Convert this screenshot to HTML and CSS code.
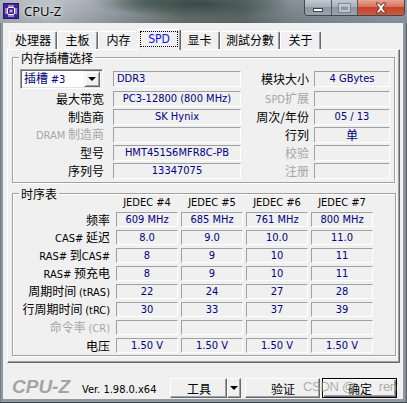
FILE: index.html
```html
<!DOCTYPE html>
<html>
<head>
<meta charset="utf-8">
<title>CPU-Z</title>
<link rel="stylesheet" href="styles.css">
</head>
<body>
<div class="window">
  <div class="titlebar">
    <div class="app-icon">
      <svg width="16" height="16" viewBox="0 0 16 16">
        <rect width="16" height="16" fill="#2a1466"/>
        <rect x="1" y="1" width="14" height="14" fill="#45259a"/>
        <g stroke="#e8e4ff" stroke-width="1">
          <line x1="6" y1="2" x2="6" y2="4"/><line x1="8" y1="2" x2="8" y2="4"/><line x1="10" y1="2" x2="10" y2="4"/>
          <line x1="6" y1="12" x2="6" y2="14"/><line x1="8" y1="12" x2="8" y2="14"/><line x1="10" y1="12" x2="10" y2="14"/>
          <line x1="2" y1="6" x2="4" y2="6"/><line x1="2" y1="8" x2="4" y2="8"/><line x1="2" y1="10" x2="4" y2="10"/>
          <line x1="12" y1="6" x2="14" y2="6"/><line x1="12" y1="8" x2="14" y2="8"/><line x1="12" y1="10" x2="14" y2="10"/>
        </g>
        <rect x="4.5" y="4.5" width="7" height="7" rx="1.5" fill="#3a1c88" stroke="#ffffff" stroke-width="1"/>
        <rect x="6.5" y="6.5" width="3" height="3" fill="#b9a8ff"/>
      </svg>
    </div>
    <div class="title">CPU-Z</div>
    <div class="wctrls">
      <div class="wbtn wmin"><span class="min-glyph"></span></div>
      <div class="wbtn wmax"><span class="max-glyph"></span></div>
      <div class="wbtn wclose">
        <svg width="14" height="12" viewBox="0 0 14 12">
          <path d="M2 1 L5 1 L7 3.6 L9 1 L12 1 L8.6 6 L12 11 L9 11 L7 8.4 L5 11 L2 11 L5.4 6 Z" fill="#ffffff" stroke="#5a2318" stroke-width="0.9" stroke-linejoin="round"/>
        </svg>
      </div>
    </div>
  </div>

  <div class="client">
    <div class="tabs">
      <div class="tab">处理器</div>
      <div class="tab">主板</div>
      <div class="tab">内存</div>
      <div class="tab active"><span class="focus">SPD</span></div>
      <div class="tab">显卡</div>
      <div class="tab">測試分數</div>
      <div class="tab">关于</div>
    </div>

    <div class="panel">
      <div class="group slot-group">
        <div class="legend">内存插槽选择</div>
        <div class="slot-grid">
          <div class="combo"><span class="combo-text">插槽 <span class="en">#3</span></span><span class="drop"><span class="tri"></span></span></div>
          <div class="field left">DDR3</div>
          <div class="lbl">模块大小</div>
          <div class="field">4 GBytes</div>

          <div class="lbl">最大带宽</div>
          <div class="field">PC3-12800 (800 MHz)</div>
          <div class="lbl dis"><span class="en">SPD</span>扩展</div>
          <div class="field"></div>

          <div class="lbl">制造商</div>
          <div class="field">SK Hynix</div>
          <div class="lbl">周次/年份</div>
          <div class="field">05 / 13</div>

          <div class="lbl dis"><span class="en">DRAM</span> 制造商</div>
          <div class="field"></div>
          <div class="lbl">行列</div>
          <div class="field zh">单</div>

          <div class="lbl">型号</div>
          <div class="field">HMT451S6MFR8C-PB</div>
          <div class="lbl dis">校验</div>
          <div class="field"></div>

          <div class="lbl">序列号</div>
          <div class="field">13347075</div>
          <div class="lbl dis">注册</div>
          <div class="field"></div>
        </div>
      </div>

      <div class="group timing-group">
        <div class="legend">时序表</div>
        <div class="timing-grid">
          <div class="lbl"></div>
          <div class="head">JEDEC #4</div>
          <div class="head">JEDEC #5</div>
          <div class="head">JEDEC #6</div>
          <div class="head">JEDEC #7</div>

          <div class="lbl">频率</div>
          <div class="field">609 MHz</div>
          <div class="field">685 MHz</div>
          <div class="field">761 MHz</div>
          <div class="field">800 MHz</div>

          <div class="lbl"><span class="en">CAS#</span> 延迟</div>
          <div class="field">8.0</div>
          <div class="field">9.0</div>
          <div class="field">10.0</div>
          <div class="field">11.0</div>

          <div class="lbl"><span class="en">RAS#</span> 到<span class="en">CAS#</span></div>
          <div class="field">8</div>
          <div class="field">9</div>
          <div class="field">10</div>
          <div class="field">11</div>

          <div class="lbl"><span class="en">RAS#</span> 预充电</div>
          <div class="field">8</div>
          <div class="field">9</div>
          <div class="field">10</div>
          <div class="field">11</div>

          <div class="lbl">周期时间 <span class="en">(tRAS)</span></div>
          <div class="field">22</div>
          <div class="field">24</div>
          <div class="field">27</div>
          <div class="field">28</div>

          <div class="lbl">行周期时间 <span class="en">(tRC)</span></div>
          <div class="field">30</div>
          <div class="field">33</div>
          <div class="field">37</div>
          <div class="field">39</div>

          <div class="lbl dis">命令率 <span class="en">(CR)</span></div>
          <div class="field"></div>
          <div class="field"></div>
          <div class="field"></div>
          <div class="field"></div>

          <div class="lbl">电压</div>
          <div class="field">1.50 V</div>
          <div class="field">1.50 V</div>
          <div class="field">1.50 V</div>
          <div class="field">1.50 V</div>
        </div>
      </div>
    </div>

    <div class="bottombar">
      <div class="logo">CPU-Z</div>
      <div class="ver">Ver. 1.98.0.x64</div>
      <div class="btn tools">工具</div>
      <div class="btn dropbtn"><span class="tri"></span></div>
      <div class="btn verify">验证</div>
      <div class="btn ok">确定</div>
      <div class="watermark"><span>CSDN @</span><span class="wm-gap"></span><span>ren</span></div>
    </div>
  </div>
</div>
</body>
</html>
```

FILE: styles.css
```css
* { box-sizing: border-box; }
html, body { margin: 0; padding: 0; }
body {
  width: 407px;
  height: 403px;
  overflow: hidden;
  background: #6f7a82;
  font-family: "DejaVu Sans Condensed", "DejaVu Sans", "Noto Sans CJK SC", sans-serif;
  font-size: 11px;
  color: #000;
}
.window {
  width: 407px;
  height: 403px;
  display: flex;
  flex-direction: column;
  background: linear-gradient(to right, #5c666d 0, #8d98a2 1px, #8d98a2 calc(100% - 2px), #4f585e 100%);
  border-bottom: 1px solid #3f474d;
}
.titlebar {
  height: 23px;
  flex: none;
  display: flex;
  align-items: flex-start;
  position: relative;
  background:
    radial-gradient(ellipse 90px 16px at 200px 4px, rgba(40,60,55,0.75), rgba(40,60,55,0) 100%),
    radial-gradient(ellipse 60px 12px at 150px 2px, rgba(60,80,70,0.6), rgba(60,80,70,0) 100%),
    linear-gradient(to bottom, rgba(255,255,255,0.08), rgba(0,0,0,0.08)),
    linear-gradient(to right, #a9b1b8 0%, #b9c0c6 12%, #9aa3aa 25%, #66726f 45%, #5e6a68 60%, #7c8890 72%, #8e9aa5 100%);
}
.app-icon { width: 16px; height: 16px; margin: 3px 0 0 3px; display: flex; }
.title {
  margin: 2px 0 0 5px;
  font-family: "Open Sans", "DejaVu Sans", sans-serif;
  font-size: 13px;
  line-height: 18px;
  color: #000;
  text-shadow: 0 0 6px rgba(255,255,255,0.9), 0 0 3px rgba(255,255,255,0.8);
}
.wctrls {
  position: absolute;
  top: 0;
  right: 2px;
  display: flex;
  height: 16px;
  border: 1px solid #3d474f;
  border-top: none;
  border-radius: 0 0 4px 4px;
  overflow: hidden;
}
.wbtn {
  height: 15px;
  display: flex;
  align-items: center;
  justify-content: center;
}
.wmin, .wmax {
  width: 27px;
  background: linear-gradient(to bottom, #c1c9d1 0%, #a7b1bb 45%, #8c97a2 50%, #9aa5b0 100%);
  border-right: 1px solid #4c565e;
}
.wmax { width: 26px; }
.wclose {
  width: 46px;
  background: linear-gradient(to bottom, #e8a593 0%, #d6735c 45%, #c2452b 50%, #cf5a3c 100%);
}
.min-glyph {
  width: 10px;
  height: 4px;
  margin-top: 5px;
  background: #fff;
  border: 1px solid #3c464e;
}
.max-glyph {
  width: 11px;
  height: 8px;
  border: 2px solid #cfd6dc;
  outline: 1px solid #6d7881;
  opacity: 0.7;
}
.wclose svg { display: block; }

.client {
  flex: 1;
  margin: 0 4px 3px 3px;
  background: #f0f0f0;
  display: flex;
  flex-direction: column;
}

/* tabs */
.tabs {
  height: 26px;
  flex: none;
  display: flex;
  align-items: flex-end;
  padding-left: 6px;
  position: relative;
  z-index: 2;
}
.tab {
  height: 18px;
  min-width: 41px;
  padding: 0 5px;
  border: 1px solid;
  border-color: #ffffff #696969 transparent #ffffff;
  border-bottom: none;
  border-radius: 2px 2px 0 0;
  box-shadow: inset -1px 0 0 #a0a0a0;
  font-family: "Noto Sans CJK SC", sans-serif;
  font-size: 12px;
  line-height: 16px;
  text-align: center;
  background: #f0f0f0;
}
.tab.active {
  height: 21px;
  margin: 0 -2px -1px -2px;
  min-width: 44px;
  padding: 1px 2px 0 2px;
  position: relative;
  z-index: 3;
}
.focus {
  display: block;
  height: 16px;
  border: 1px dotted #000;
  font-family: "DejaVu Sans Condensed", "DejaVu Sans", sans-serif;
  font-size: 12px;
  line-height: 14px;
  color: #1010ff;
  padding: 0 4px;
}

/* panel */
.panel {
  height: 314px;
  flex: none;
  margin: 0 3px 0 4px;
  border: 1px solid;
  border-color: #ffffff #696969 #696969 #ffffff;
  box-shadow: inset -1px -1px 0 #a0a0a0;
  display: flex;
  flex-direction: column;
}
.group {
  position: relative;
  border: 1px solid #a0a0a0;
  box-shadow: 1px 1px 0 #ffffff, inset 1px 1px 0 #ffffff;
}
.legend {
  position: absolute;
  top: -8px;
  left: 6px;
  padding: 0 2px;
  background: #f0f0f0;
  font-family: "Noto Sans CJK SC", sans-serif;
  font-size: 12px;
  line-height: 16px;
}
.slot-group {
  margin: 7px 4px 0 4px;
  padding: 11px 0 3px 7px;
}
.timing-group {
  margin: 10px 3px 0 4px;
  padding: 3px 0 2px 0;
}

.lbl {
  font-family: "Noto Sans CJK SC", sans-serif;
  font-size: 12px;
  line-height: 16px;
  text-align: right;
  white-space: nowrap;
  color: #000;
}
.lbl.dis { color: #a6a6a6; }
.en {
  font-family: "DejaVu Sans Condensed", "DejaVu Sans", sans-serif;
  font-size: 11px;
}
.field {
  height: 16px;
  border: 1px solid;
  border-color: #a0a0a0 #ffffff #ffffff #a0a0a0;
  color: #000080;
  font-size: 11px;
  line-height: 14px;
  text-align: center;
  white-space: nowrap;
  overflow: hidden;
}
.field.left { text-align: left; padding-left: 3px; }
.field.zh { font-family: "Noto Sans CJK SC", sans-serif; font-size: 12px; }

.slot-grid {
  display: grid;
  grid-template-columns: 93px 128px 73px 76px;
  grid-auto-rows: 16px;
  grid-template-rows: 20px;
  row-gap: 2px;
  align-items: center;
}
.slot-grid > .lbl:nth-child(4n+1) { padding-right: 9px; }
.slot-grid > .lbl:nth-child(4n+3) { padding-right: 5px; }

.combo {
  width: 83px;
  height: 20px;
  background: #ffffff;
  border: 1px solid;
  border-color: #a0a0a0 #ffffff #ffffff #a0a0a0;
  box-shadow: inset 1px 1px 0 #696969, inset -1px -1px 0 #e3e3e3;
  display: flex;
  align-items: center;
  justify-content: space-between;
  padding: 0 2px 0 3px;
}
.combo-text {
  font-family: "Noto Sans CJK SC", sans-serif;
  font-size: 12px;
  line-height: 16px;
  color: #000080;
}
.combo-text .en { color: #0000a0; }
.drop {
  width: 16px;
  height: 16px;
  background: #f0f0f0;
  border: 1px solid;
  border-color: #f0f0f0 #696969 #696969 #f0f0f0;
  box-shadow: inset 1px 1px 0 #ffffff, inset -1px -1px 0 #a0a0a0;
  display: flex;
  align-items: center;
  justify-content: center;
}
.tri {
  width: 0;
  height: 0;
  border-left: 4px solid transparent;
  border-right: 4px solid transparent;
  border-top: 4px solid #000;
}

.timing-grid {
  display: grid;
  grid-template-columns: 100px 62px 62px 62px 62px;
  column-gap: 3px;
  grid-template-rows: 12px;
  grid-auto-rows: 15px;
  row-gap: 3px;
  align-items: center;
}
.timing-grid > .lbl { margin-right: 3px; }
.timing-grid .field { height: 15px; line-height: 13px; }
.head {
  text-align: center;
  font-size: 11px;
  line-height: 12px;
  white-space: nowrap;
}

/* bottom */
.bottombar {
  flex: 1;
  display: flex;
  align-items: flex-start;
  padding: 14px 0 0 9px;
  position: relative;
}
.logo {
  font-family: "Liberation Sans", Arial, sans-serif;
  font-weight: bold;
  font-style: italic;
  font-size: 19px;
  line-height: 20px;
  color: #a4a4a4;
}
.ver {
  margin: 6px 0 0 12px;
  font-size: 11px;
  line-height: 14px;
  color: #000;
}
.btn {
  height: 20px;
  margin-top: 1px;
  background: #f0f0f0;
  border: 1px solid;
  border-color: #ffffff #696969 #696969 #ffffff;
  box-shadow: inset -1px -1px 0 #a0a0a0;
  font-family: "Noto Sans CJK SC", sans-serif;
  font-size: 12px;
  line-height: 17px;
  text-align: center;
  display: flex;
  align-items: center;
  justify-content: center;
}
.tools { width: 57px; margin-left: 14px; }
.dropbtn { width: 14px; }
.verify { width: 75px; margin-left: 4px; }
.ok {
  width: 75px;
  margin-left: 2px;
  border: 1px solid #000;
  box-shadow: inset 1px 1px 0 #ffffff, inset -1px -1px 0 #696969, inset -2px -2px 0 #a0a0a0;
}
.watermark {
  position: absolute;
  left: 300px;
  top: 15px;
  display: flex;
  font-family: "Liberation Sans", Arial, sans-serif;
  font-size: 13px;
  line-height: 18px;
  letter-spacing: -0.3px;
  color: rgba(150,150,150,0.75);
  pointer-events: none;
}
.wm-gap { width: 24px; }
```
